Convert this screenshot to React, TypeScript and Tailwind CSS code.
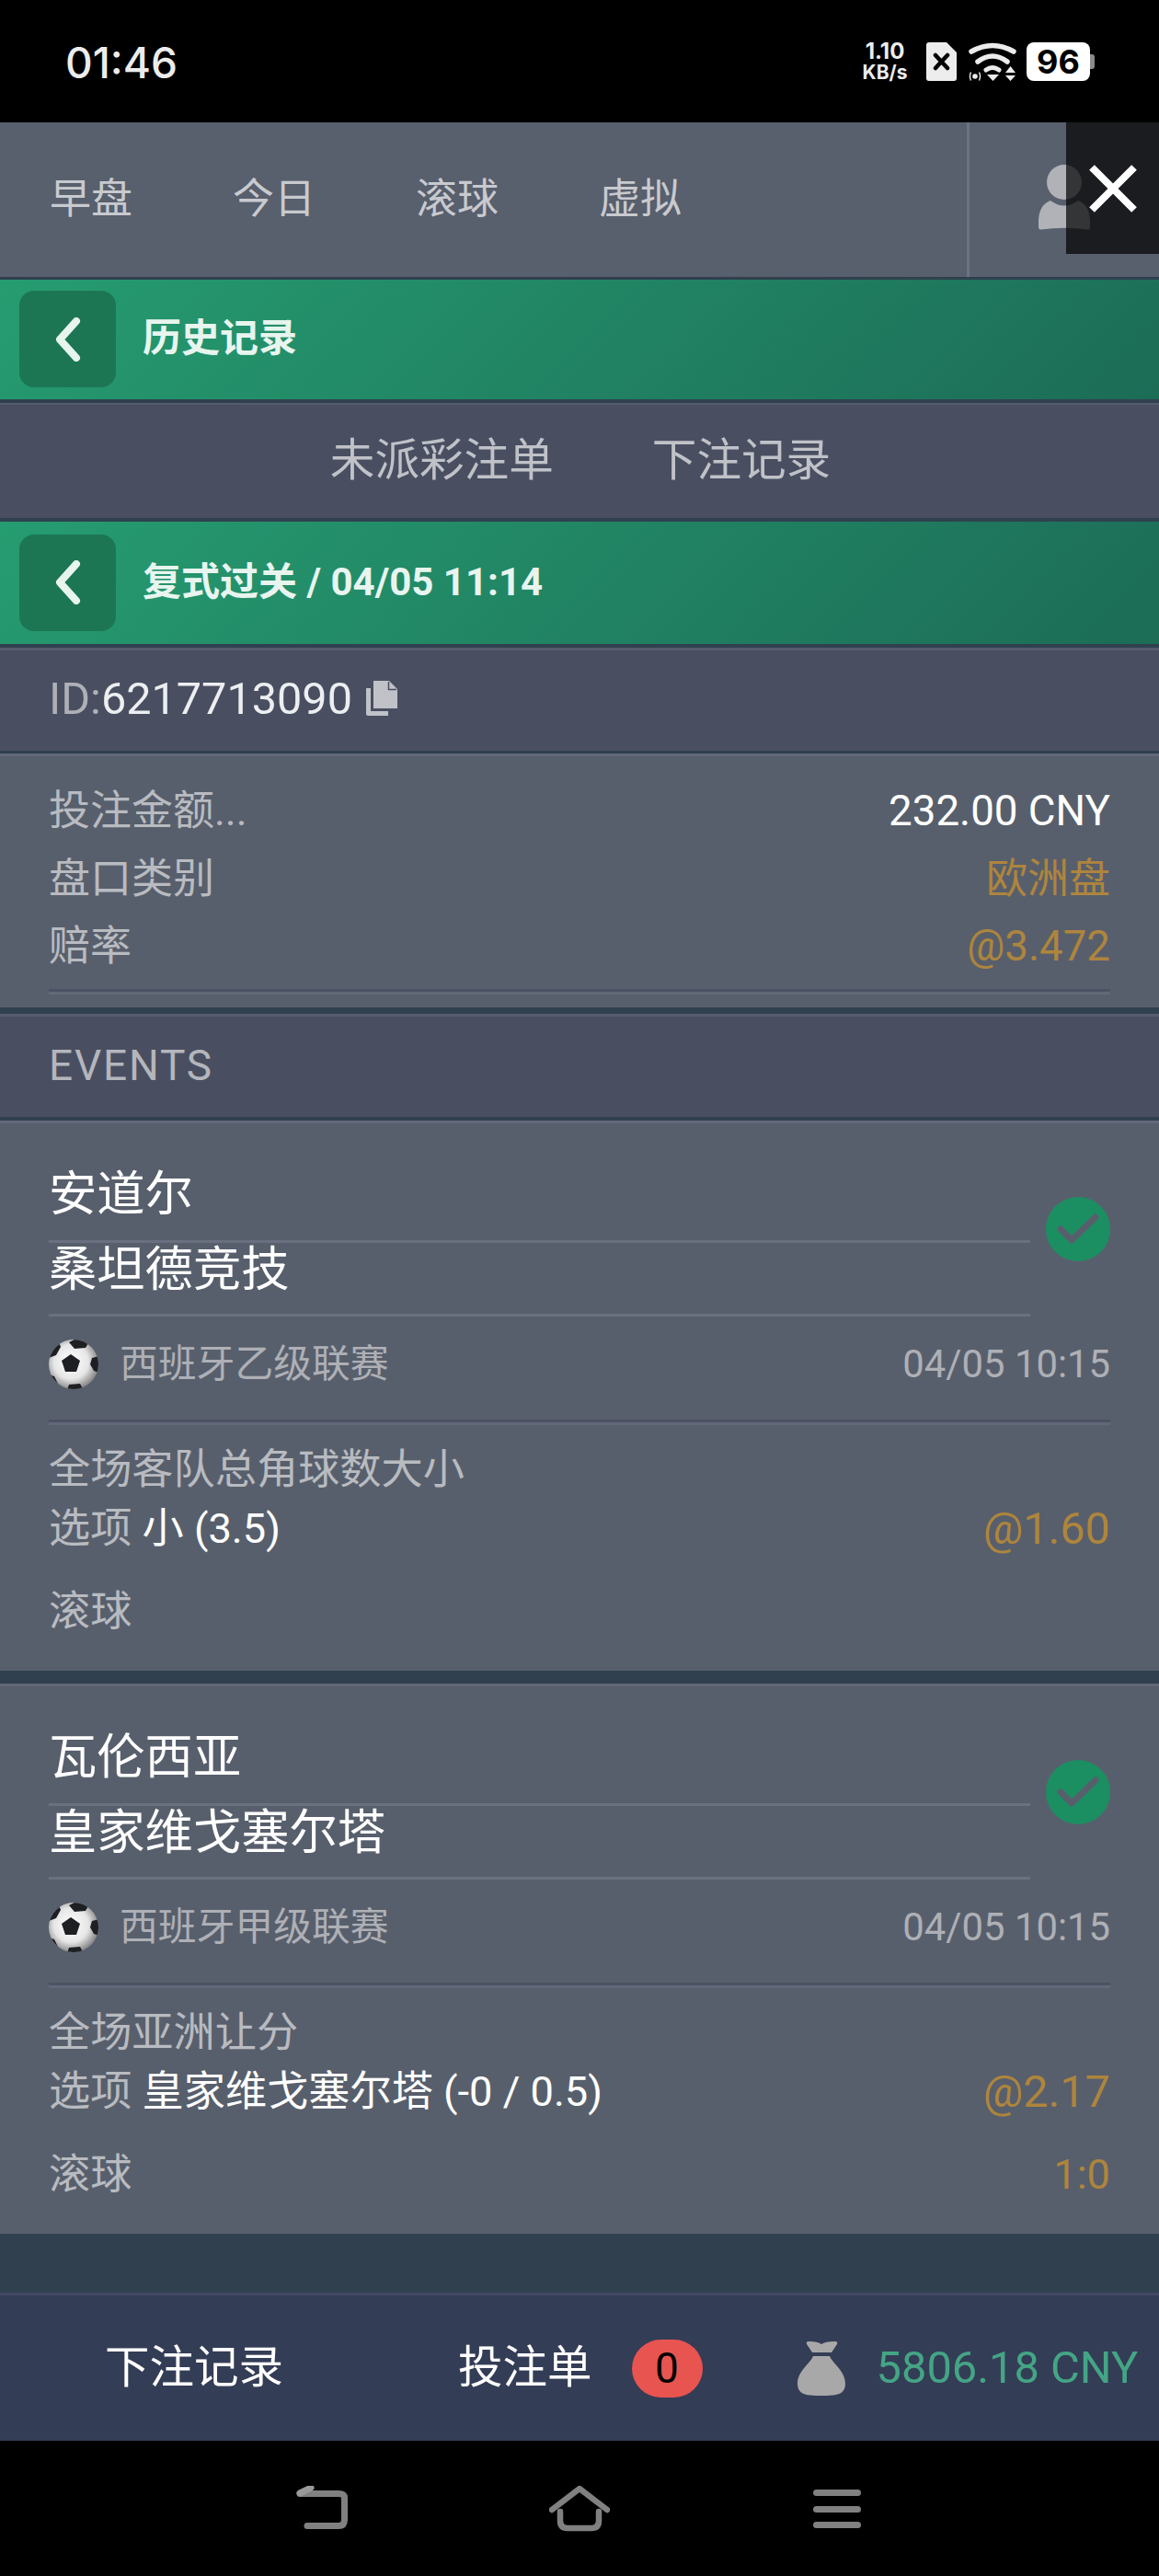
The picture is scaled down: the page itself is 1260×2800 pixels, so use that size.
import React from 'react';

const fontCls = "font-[family-name:Roboto,'Noto_Sans_CJK_SC',sans-serif]";

type Event = {
  home: string;
  away: string;
  league: string;
  time: string;
  market: string;
  pick: string;
  odds: string;
  score?: string;
};

const events: Event[] = [
  {
    home: '安道尔',
    away: '桑坦德竞技',
    league: '西班牙乙级联赛',
    time: '04/05 10:15',
    market: '全场客队总角球数大小',
    pick: '小 (3.5)',
    odds: '@1.60',
  },
  {
    home: '瓦伦西亚',
    away: '皇家维戈塞尔塔',
    league: '西班牙甲级联赛',
    time: '04/05 10:15',
    market: '全场亚洲让分',
    pick: '皇家维戈塞尔塔 (-0 / 0.5)',
    odds: '@2.17',
    score: '1:0',
  },
];

function Chevron() {
  return (
    <svg width="30" height="48" viewBox="0 0 30 48" fill="none">
      <path d="M24 4 L6 24 L24 44" stroke="#e8f5ef" strokeWidth="8" strokeLinecap="round" strokeLinejoin="round" />
    </svg>
  );
}

function GreenBar({ title, h, mt }: { title: string; h: string; mt: string }) {
  return (
    <div className={`flex items-center ${h} ${mt} bg-[linear-gradient(135deg,#269c71,#1c6c56)] pl-[21px]`}>
      <div className="-mt-[1px] flex h-[105px] w-[105px] items-center justify-center rounded-[16px] bg-[#1c7654]">
        <Chevron />
      </div>
      <div className="-mt-[2px] ml-[29px] text-[42px] leading-[52px] font-bold text-[#e8f5ef]">{title}</div>
    </div>
  );
}

function SimIcon() {
  return (
    <svg width="33" height="42" viewBox="0 0 33 42">
      <path d="M3 0 H22 L33 11 V39 Q33 42 30 42 H3 Q0 42 0 39 V3 Q0 0 3 0 Z" fill="#ececec" />
      <path d="M10 14 L23 28 M23 14 L10 28" stroke="#000" strokeWidth="4.5" strokeLinecap="round" />
    </svg>
  );
}

function WifiIcon() {
  return (
    <svg width="52" height="42" viewBox="0 0 52 42" fill="none">
      <path d="M3 10 Q26 -3 49 10" stroke="#ececec" strokeWidth="5.5" strokeLinecap="round" />
      <path d="M10 21 Q26 9 42 21" stroke="#ececec" strokeWidth="5.5" strokeLinecap="round" />
      <path d="M19 30 Q26 25 33 30" stroke="#ececec" strokeWidth="5" strokeLinecap="round" />
      <path d="M20 35 H33 L26.5 42 Z" fill="#ececec" />
      <path d="M40 33 L45.500 26 L51 33 Z M40 36 H51 L45.500 42 Z" fill="#ececec" />
      <circle cx="7" cy="37" r="2.8" fill="#ececec" />
      <path d="M2.500 32.500 Q0.500 37 2.500 41.500 M11.500 32.500 Q13.500 37 11.500 41.500" stroke="#ececec" strokeWidth="1.4" />
    </svg>
  );
}

function UserIcon() {
  return (
    <svg width="58" height="72" viewBox="0 0 58 72" fill="#b0b2b7">
      <circle cx="29" cy="19" r="19" />
      <path d="M14 39 Q29 50 44 39 Q57 44 57 62 L57 68 Q57 71 54 70.5 Q29 67 4 70.5 Q1 71 1 68 L1 62 Q1 44 14 39 Z" />
    </svg>
  );
}

function CopyIcon() {
  return (
    <svg width="34" height="38" viewBox="0 0 34 38" fill="#c0c2c8" className="-mt-[2px] ml-[15px]">
      <path d="M8 0 H25 L34 9 V30 H8 Z" />
      <path d="M0 8 H5 V33 H24 V38 H2 Q0 38 0 36 Z" />
      <path d="M24.5 1 V9.5 H33" stroke="#494f61" strokeWidth="1.5" fill="none" />
    </svg>
  );
}

function Ball({ id }: { id: string }) {
  return (
    <svg width="54" height="54" viewBox="0 0 54 54" className="shrink-0">
      <defs>
        <radialGradient id={`${id}-fill`} cx="45%" cy="45%" r="58%">
          <stop offset="0%" stopColor="#ffffff" />
          <stop offset="60%" stopColor="#e6e6e6" />
          <stop offset="100%" stopColor="#7e7e7e" />
        </radialGradient>
        <clipPath id={`${id}-clip`}>
          <ellipse cx="27" cy="27" rx="27" ry="27" />
        </clipPath>
      </defs>
      <circle cx="27" cy="27" r="27" fill={`url(#${id}-fill)`} />
      <g clipPath={`url(#${id}-clip)`} fill="#1e1f22">
        <path d="M24 16 L34 23 L30 35 L18 35 L14 23 Z" />
        <path d="M22 3 L32 -2 L44 2 L40 9 L28 10 Z" />
        <path d="M0 20 L2 10 L11 3 L13 8 L8 17 Z" />
        <path d="M47 20 L55 18 L55 36 L49 34 L45 27 Z" />
        <path d="M22 49 L34 48 L38 55 L20 55 Z" />
        <path d="M0 38 L6 40 L10 48 L4 50 Z" />
      </g>
    </svg>
  );
}

function Check() {
  return (
    <div className="mt-[32px] flex h-[70px] w-[70px] shrink-0 items-center justify-center rounded-full bg-[#1b8f62]">
      <svg width="46" height="36" viewBox="0 0 46 36" fill="none">
        <path d="M4 18 L16 30 L42 5" stroke="#585f6c" strokeWidth="7" strokeLinecap="round" strokeLinejoin="round" />
      </svg>
    </div>
  );
}

function EventCard({ ev, mt, idx }: { ev: Event; mt: string; idx: number }) {
  return (
    <div className={`${mt} h-[598px] border-t-[3px] border-[#626878] bg-[#585f6c] px-[53px] pt-[48px]`}>
      <div className="flex items-start gap-[17px]">
        <div className="flex-1">
          <div className="h-[82px] border-b-[3px] border-[#6a7080] pt-[3px] text-[52.3px] leading-[52px] text-white">{ev.home}</div>
          <div className="h-[80px] border-b-[3px] border-[#6a7080] pt-[3px] text-[52.3px] leading-[52px] text-white">{ev.away}</div>
        </div>
        <Check />
      </div>
      <div className="flex h-[112px] items-center pb-[8px]">
        <Ball id={`ball-${idx}`} />
        <div className="ml-[23px] flex-1 text-[41.8px] leading-[52px] text-[#aeb0b6]">{ev.league}</div>
        <div className="text-[41.8px] leading-[52px] text-[#aeb0b6]">{ev.time}</div>
      </div>
      <div className="border-y-[3px] border-t-[#4c5264] border-b-[#626878]" />
      <div className="mt-[18px] h-[62px] text-[45.2px] leading-[62px] text-[#b8bbc0]">{ev.market}</div>
      <div className="flex h-[66px] items-center justify-between text-[45.2px] leading-[64px]">
        <div>
          <span className="text-[#b8bbc0]">选项 </span>
          <span className="text-white">{ev.pick}</span>
        </div>
        <div className="text-[48.5px] text-[#ae853d]">{ev.odds}</div>
      </div>
      <div className="mt-[26px] flex h-[62px] items-center justify-between text-[45.2px] leading-[62px]">
        <div className="text-[#b8bbc0]">滚球</div>
        {ev.score && <div className="text-[#ae853d]">{ev.score}</div>}
      </div>
    </div>
  );
}

export default function App() {
  return (
    <div className={`relative flex h-[2800px] w-full flex-col bg-[#30404f] ${fontCls}`}>
      {/* status bar */}
      <div className="flex h-[133px] items-center justify-between bg-black pr-[75px] pl-[71px]">
        <div className="mt-[3px] font-['Inter'] text-[46px] leading-[56px] font-medium text-[#ececec]">01:46</div>
        <div className="flex items-center">
          <div className="flex w-[52px] flex-col items-center font-['Inter'] font-bold text-[#ececec]">
            <div className="text-[24px] leading-[24px]">1.10</div>
            <div className="text-[21px] leading-[22px]">KB/s</div>
          </div>
          <div className="ml-[19px]"><SimIcon /></div>
          <div className="ml-[13px]"><WifiIcon /></div>
          <div className="relative ml-[11px] flex h-[42px] w-[69px] items-center justify-center rounded-[8px] bg-white font-['Inter'] text-[36px] font-bold text-black">
            96
            <div className="absolute top-[13px] right-[-5px] h-[16px] w-[5px] rounded-r-[3px] bg-[#8a8a8a]" />
          </div>
        </div>
      </div>

      {/* nav */}
      <div className="flex h-[168px] bg-[#585f6d]">
        <div className="flex flex-1 items-center gap-[109px] border-r-[3px] border-[#6b7283] pl-[54px] text-[45px] text-[#c8cacf]">
          <div>早盘</div>
          <div>今日</div>
          <div>滚球</div>
          <div>虚拟</div>
        </div>
        <div className="flex w-[206px] justify-center pt-[46px]">
          <UserIcon />
        </div>
      </div>

      <GreenBar title="历史记录" h="h-[130px]" mt="mt-[3px]" />

      {/* tabs */}
      <div className="mt-[4px] flex h-[125px] items-center justify-center gap-[107px] border-t-[2px] border-[#565c6e] bg-[#494f61] pl-[2px] text-[48.6px] text-[#c0c2c8]">
        <div>未派彩注单</div>
        <div>下注记录</div>
      </div>

      <GreenBar title="复式过关 / 04/05 11:14" h="h-[133px]" mt="mt-[4px]" />

      {/* bet id */}
      <div className="mt-[4px] flex h-[112px] items-center border-t-[3px] border-[#565c6e] bg-[#494f61] pb-[3px] pl-[53px] text-[48.6px]">
        <span className="text-[#aeb0b6]">ID:</span>
        <span className="text-[#eceef0]">6217713090</span>
        <CopyIcon />
      </div>

      {/* summary */}
      <div className="mt-[3px] h-[276px] border-t-[3px] border-[#626878] bg-[#585f6c] px-[53px] pt-[23px] text-[45px]">
        <div className="flex h-[74px] items-center justify-between">
          <div className="text-[#b8bbc0]">投注金额...</div>
          <div className="text-[45.7px] text-white">232.00 CNY</div>
        </div>
        <div className="flex h-[74px] items-center justify-between">
          <div className="text-[#b8bbc0]">盘口类别</div>
          <div className="text-[#ae853d]">欧洲盘</div>
        </div>
        <div className="flex h-[72px] items-center justify-between">
          <div className="text-[#b8bbc0]">赔率</div>
          <div className="text-[45.7px] text-[#ae853d]">@3.472</div>
        </div>
        <div className="mt-[10px] border-y-[3px] border-t-[#4c5264] border-b-[#626878]" />
      </div>

      {/* events header */}
      <div className="mt-[7px] flex h-[112px] items-center border-t-[3px] border-[#565c6e] bg-[#494f61] pb-[2px] pl-[53px] text-[46px] tracking-[1.8px] text-[#b4b6bc]">
        EVENTS
      </div>

      <EventCard ev={events[0]} mt="mt-[4px]" idx={0} />
      <EventCard ev={events[1]} mt="mt-[14px]" idx={1} />

      <div className="flex-1" />

      {/* footer */}
      <div className="flex h-[161px] items-center border-t-[3px] border-[#434863] bg-[#343d56] text-[48.5px]">
        <div className="ml-[114px] text-white">下注记录</div>
        <div className="ml-[190px] text-white">投注单</div>
        <div className="ml-[43px] flex h-[63px] w-[77px] items-center justify-center rounded-full bg-[#e85450] text-[46px] text-black">0</div>
        <svg width="52" height="59" viewBox="0 0 52 59" fill="#a8a8a8" className="ml-[103px]">
          <path d="M12 0 Q22 0 26 3 Q30 0 41 0 Q44 0 43 3 L37 12 H16 L10 3 Q9 0 12 0 Z" />
          <path d="M17 16 H35 C38 24 52 32 52 46 C52 55 46 58 38 58.500 Q26 59.500 14 58.500 C6 58 0 55 0 46 C0 32 14 24 17 16 Z" />
        </svg>
        <div className="ml-[34px] text-[48.8px] text-[#44a585]">5806.18 CNY</div>
      </div>

      {/* android nav */}
      <div className="flex h-[147px] bg-black">
        <div className="relative w-full">
          <svg width="56" height="50" viewBox="0 0 56 50" fill="none" className="absolute top-[49px] left-[322px]">
            <path d="M12 43.500 H46 Q52.500 43.500 52.500 37 V13 Q52.500 8.500 46 8.500 H4" stroke="#808080" strokeWidth="7" strokeLinecap="round" />
            <path d="M4 8 L16 2" stroke="#9a9a9a" strokeWidth="7" strokeLinecap="round" />
          </svg>
          <svg width="66" height="50" viewBox="0 0 66 50" fill="none" className="absolute top-[49px] left-[597px]">
            <path d="M3 26 L33 3 L63 26" stroke="#808080" strokeWidth="6.500" strokeLinecap="round" strokeLinejoin="round" />
            <path d="M12 28 V38 Q12 46 20 46 H46 Q54 46 54 38 V28" stroke="#808080" strokeWidth="6.500" strokeLinecap="round" />
          </svg>
          <div className="absolute top-[53px] left-[884px] flex w-[52px] flex-col gap-[10.500px]">
            <div className="h-[7px] rounded-full bg-[#808080]" />
            <div className="h-[7px] rounded-full bg-[#808080]" />
            <div className="h-[7px] rounded-full bg-[#808080]" />
          </div>
        </div>
      </div>

      {/* close overlay */}
      <div className="absolute top-[133px] right-0 flex h-[143px] w-[101px] items-center justify-center bg-black/70">
        <svg width="52" height="52" viewBox="0 0 52 52">
          <path d="M3 3 L49 49 M49 3 L3 49" stroke="#fff" strokeWidth="8" />
        </svg>
      </div>
    </div>
  );
}
